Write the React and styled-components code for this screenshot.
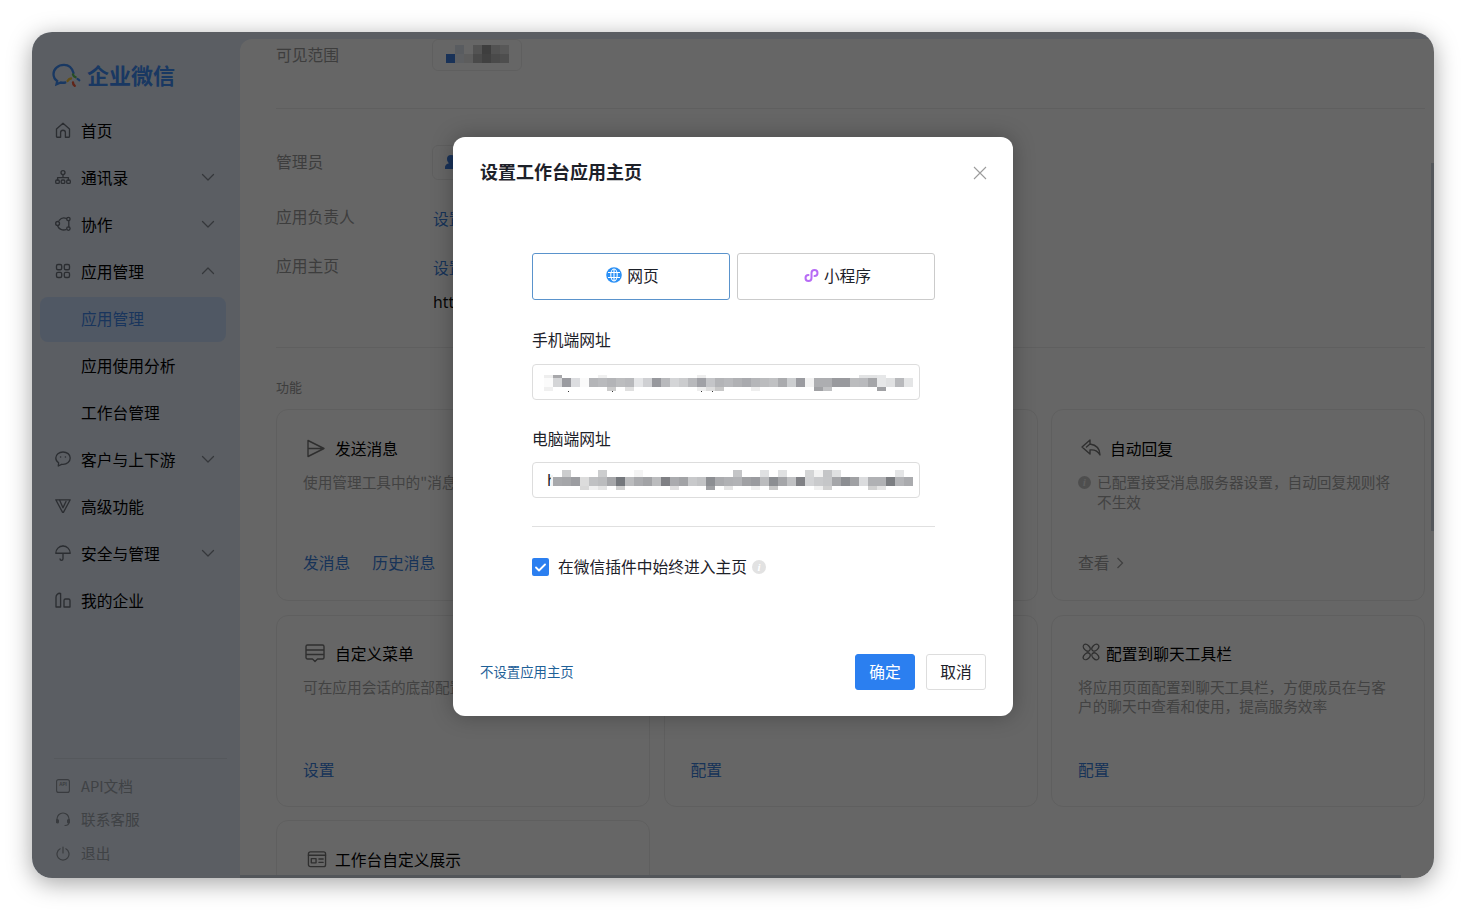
import React from "react";
import styled, { createGlobalStyle } from "styled-components";

const Global = createGlobalStyle`
  html, body { margin: 0; padding: 0; background: #fff; }
  body { font-family: "Noto Sans CJK SC", "Noto Sans", sans-serif; color: #000; }
  * { box-sizing: border-box; }
`;

const Page = styled.div`
  width: 1466px;
  height: 910px;
  padding: 32px;
  overflow: hidden;
`;
const Win = styled.div`
  position: relative;
  width: 1402px;
  height: 846px;
  border-radius: 20px;
  overflow: hidden;
  display: grid;
  grid-template-columns: 208px 1fr;
  background: #e3ebf7;
`;
const Shadow = styled.div`
  border-radius: 20px;
  box-shadow: 0 5px 24px rgba(0, 0, 0, 0.36);
  width: 1402px;
  height: 846px;
`;
const Side = styled.aside`
  display: flex;
  flex-direction: column;
  height: 846px;
  padding: 0 14px 8px 8px;
`;
const Logo = styled.div`
  display: flex;
  align-items: center;
  gap: 6px;
  height: 74.5px;
  padding: 10px 0 0 12px;
  font-size: 22px;
  font-weight: 700;
  color: #3f8cf5;
  line-height: 1;
`;
const LogoSvg = styled.svg`
  margin-top: 5px;
  flex: none;
`;
const Nav = styled.nav`
  display: flex;
  flex-direction: column;
`;
const NavItem = styled.div`
  height: 47px;
  display: flex;
  align-items: center;
  padding: 0 11px 0 15px;
  font-size: 15.75px;
  color: ${p => (p.$active ? "#3f86e8" : "#000")};
  position: relative;
  &::before {
    content: "";
    display: ${p => (p.$active ? "block" : "none")};
    position: absolute;
    left: 0; right: 0; top: 2px; bottom: 0;
    border-radius: 8px;
    background: #c8dcfa;
    z-index: 0;
  }
`;
const NavIcon = styled.span`
  width: 26px;
  height: 18px;
  flex: none;
  color: #6c727c;
  display: flex;
  align-items: center;
  position: relative;
`;
const NavLabel = styled.span`
  flex: 1;
  position: relative;
  white-space: nowrap;
`;
const Chev = styled.svg`
  width: 14px;
  height: 14px;
  color: #858b94;
  flex: none;
  position: relative;
`;
const SideFoot = styled.div`
  margin-top: auto;
  border-top: 1px solid #d4dbe6;
  margin-left: 14px;
  margin-right: -1px;
  padding-top: 11px;
`;
const FootItem = styled.div`
  height: 33.5px;
  display: flex;
  align-items: center;
  margin-left: 1px;
  padding-bottom: 2px;
  font-size: 14.67px;
  color: #9fa5ad;
`;
const FootIcon = styled.span`
  width: 26px;
  height: 16px;
  display: flex;
  align-items: center;
  padding-left: 1px;
  margin-top: 2px;
  color: #8f959d;
`;

const Main = styled.main`
  margin-top: 7px;
  height: 839px;
  background: #fff;
  border-top-left-radius: 12px;
  overflow: hidden;
  padding: 0 9px 0 36px;
`;
const InfoRow = styled.div`
  display: grid;
  grid-template-columns: 157px 1fr;
  align-items: center;
  height: ${p => p.$h}px;
  margin-top: ${p => p.$top || 0}px;
  font-size: 15.75px;
  color: #9a9a9a;
`;
const RowLabel = styled.span`
  padding-bottom: 2px;
`;
const Pill = styled.div`
  width: ${p => p.$w}px;
  height: 100%;
  margin-left: -1px;
  border: 1px solid #eee;
  border-radius: 6px;
  position: relative;
  overflow: hidden;
`;
const AdminGlyph = styled.svg`
  display: block;
  margin: 7px 0 0 8px;
`;
const Rule = styled.div`
  height: 1px;
  background: #eee;
  margin-top: ${p => p.$top}px;
  margin-bottom: ${p => p.$bottom}px;
`;
const SetLink = styled.span`
  color: #3a80dc;
  padding-top: 2px;
`;
const Url = styled.div`
  margin: -1px 0 0 157px;
  font-size: 15.75px;
  color: #111;
  height: 24px;
  line-height: 24px;
  font-family: "Noto Sans", sans-serif;
`;
const Section = styled.div`
  font-size: 13px;
  line-height: 18px;
  color: #9a9a9a;
  margin-bottom: 13px;
`;
const Cards = styled.div`
  display: grid;
  grid-template-columns: repeat(3, 374px);
  grid-auto-rows: 192px;
  gap: 13.5px;
`;
const Card = styled.section`
  border: 1px solid #eee;
  border-radius: 12px;
  padding: 27px 26px 0;
  display: flex;
  flex-direction: column;
`;
const CardTitle = styled.div`
  display: flex;
  align-items: center;
  height: 22px;
  font-size: 15.75px;
  color: #000;
  gap: ${p => p.$gap ?? 10}px;
  white-space: nowrap;
`;
const CardIcon = styled.span`
  display: flex;
  align-items: center;
  color: #757575;
  margin-left: ${p => p.$ml ?? 2}px;
  margin-top: ${p => p.$mt || 0}px;
`;
const Desc = styled.p`
  margin: ${p => (p.$tight ? 12 : 13)}px 0 0;
  font-size: 14.67px;
  line-height: ${p => (p.$tight ? 19 : 20)}px;
  color: #a6a6a6;
  height: 40px;
  white-space: ${p => (p.$nowrap ? "nowrap" : "normal")};
  display: ${p => (p.$flex ? "flex" : "block")};
  gap: 6px;
`;
const Links = styled.div`
  margin-top: ${p => p.$top ?? 39}px;
  display: flex;
  gap: 22px;
  font-size: 15.75px;
  line-height: 24px;
  color: ${p => (p.$muted ? "#a0a0a0" : "#3a80dc")};
  align-items: center;
`;
const MoreArrow = styled.svg`
  margin-left: -16px;
`;
const TinyDot = styled.span`
  flex: none;
  width: 13px;
  height: 13px;
  margin-top: 3.5px;
  border-radius: 50%;
  background: #c4c4c4;
  color: #eee;
  font: italic 700 10px/13px "Liberation Serif", serif;
  text-align: center;
`;

const VBar = styled.div`
  position: absolute;
  right: 0;
  top: 131px;
  width: 3px;
  height: 368px;
  background: #d0d6e0;
`;
const HBar = styled.div`
  position: absolute;
  left: 208px;
  bottom: 0;
  width: 1161px;
  height: 3px;
  background: #d0d6e0;
`;
const Overlay = styled.div`
  position: absolute;
  inset: 0;
  background: rgba(0, 0, 0, 0.6);
  display: flex;
  justify-content: center;
  padding-top: 105px;
`;
const Modal = styled.div`
  width: 560px;
  height: 579px;
  background: #fff;
  border-radius: 12px;
  box-shadow: 0 0 22px rgba(0, 0, 0, 0.28);
  display: flex;
  flex-direction: column;
  position: relative;
`;
const ModalHead = styled.div`
  display: flex;
  justify-content: space-between;
  align-items: center;
  height: 68px;
  padding: 0 26px 0 27px;
  font-size: 18px;
  font-weight: 700;
  color: #1d2129;
`;
const Close = styled.svg`
  width: 14px;
  height: 14px;
  color: #9c9c9c;
  margin-top: 4px;
`;
const Body = styled.div`
  padding: 48px 78px 0 79px;
  flex: 1;
`;
const Tabs = styled.div`
  display: grid;
  grid-template-columns: 198px 198px;
  gap: 7px;
  height: 47px;
`;
const Tab = styled.div`
  border: 1px solid ${p => (p.$on ? "#5a93cc" : "#cbcbcb")};
  border-radius: 3px;
  display: flex;
  align-items: center;
  justify-content: center;
  gap: 5px;
  padding: 0 0 2px 3px;
  font-size: 15.75px;
  color: #1d2129;
`;
const TabGlyph = styled.svg`
  flex: none;
  margin-top: -1px;
`;
const FieldLabel = styled.div`
  font-size: 15.75px;
  line-height: 24px;
  color: #1d2129;
  margin-top: ${p => p.$top}px;
  margin-bottom: ${p => p.$bottom}px;
`;
const UrlInput = styled.div`
  position: relative;
  width: 388px;
  height: 36px;
  border: 1px solid #ddd;
  border-radius: 4px;
  padding-left: 14px;
  font-size: 15.75px;
  line-height: 34px;
  color: #1d2129;
  font-family: "Noto Sans", sans-serif;
  overflow: hidden;
`;
const Mosaic = styled.svg`
  position: absolute;
  display: block;
  shape-rendering: crispEdges;
`;
const Divider = styled.div`
  height: 1px;
  background: #e0e0e0;
  margin-top: 28px;
`;
const CheckRow = styled.div`
  margin-top: 31px;
  display: flex;
  align-items: center;
  height: 18px;
  font-size: 15.75px;
  color: #1d2129;
`;
const CheckText = styled.span`
  padding-bottom: 2px;
`;
const Box = styled.span`
  width: 17px;
  height: 18px;
  border-radius: 2px;
  background: #2b7ff0;
  display: flex;
  align-items: center;
  justify-content: center;
  margin-right: 9px;
`;
const Hint = styled.span`
  width: 14px;
  height: 14px;
  margin-left: 5px;
  border-radius: 50%;
  background: #e2e2e2;
  color: #fff;
  font: italic 700 11px/14px "Liberation Serif", serif;
  text-align: center;
`;
const Foot = styled.div`
  display: flex;
  align-items: center;
  height: 36px;
  margin: 0 27px 26px;
  font-size: 13.4px;
  color: #1f6198;
`;
const FootLink = styled.span`
  padding-bottom: 2px;
`;
const Spacer = styled.span`
  flex: 1;
`;
const Btn = styled.div`
  width: 60px;
  height: 36px;
  border-radius: 3px;
  display: flex;
  align-items: center;
  justify-content: center;
  padding-bottom: 2px;
  font-size: 15.75px;
  margin-left: ${p => p.$ml || 0}px;
  background: ${p => (p.$primary ? "#2b7ff0" : "#fff")};
  color: ${p => (p.$primary ? "#fff" : "#1d2129")};
  border: 1px solid ${p => (p.$primary ? "#2b7ff0" : "#ddd")};
`;

const S = ({ children, w = 16, h = 16, vb = "0 0 16 16", sw = 1.35 }) => (
  <svg width={w} height={h} viewBox={vb} fill="none" stroke="currentColor" strokeWidth={sw} strokeLinecap="round" strokeLinejoin="round">{children}</svg>
);
const IHome = () => <S><path d="M1.5 7 8 1.2 14.5 7v7.6a.6.6 0 0 1-.6.6H10.4V10.6a2.4 2.4 0 0 0-4.8 0v4.6H2.1a.6.6 0 0 1-.6-.6z" /></S>;
const IOrg = () => <S><circle cx="8" cy="3.6" r="2" /><path d="M8 5.6v3M2.6 11V8.6h10.8V11" /><rect x=".7" y="11" width="3.6" height="3.4" rx="1.2" /><rect x="6.2" y="11" width="3.6" height="3.4" rx="1.2" /><rect x="11.7" y="11" width="3.6" height="3.4" rx="1.2" /></S>;
const ICollab = () => <S><path d="M11.5 2.5A6 6 0 0 0 4.2 4.4M2.8 10.2c.9 2.6 4.6 4.6 8.2 3.4M13.8 5v6" /><circle cx="13.4" cy="3" r="1.7" /><circle cx="13.4" cy="12.6" r="1.7" /><circle cx="2.6" cy="7.4" r="1.9" /></S>;
const IGrid = () => <S><rect x="1.5" y="1.5" width="5.2" height="5.2" rx="1.5" /><rect x="9.3" y="1.5" width="5.2" height="5.2" rx="1.5" /><rect x="1.5" y="9.3" width="5.2" height="5.2" rx="1.5" /><rect x="9.3" y="9.3" width="5.2" height="5.2" rx="1.5" /></S>;
const IBubble = () => <S><path d="M8 1C4 1 .8 3.6.8 7c0 2 1.1 3.700 2.800 4.800L3.300 15l3.300-1.700c.5.100.9.100 1.400.100 4 0 7.200-2.800 7.200-6.400S12 1 8 1z" /><circle cx="5.600" cy="6" r=".8" fill="currentColor" stroke="none" /><circle cx="10.400" cy="6" r=".8" fill="currentColor" stroke="none" /></S>;
const IVee = () => <S><path d="M.8 1.800h14.400L8.400 14.400h-.8zM4.400 1.800l3.600 8 2-4.300M10 5.500l1-2" /></S>;
const IUmbrella = () => <S><path d="M.8 8.200a7.200 7.200 0 0 1 14.400 0zM8 1V.6M8 8.200v5.600a1.500 1.500 0 0 1-3 0" /></S>;
const ICompany = () => <S><path d="M1 15V5.500a4 4 0 0 1 4-4.200h.6V15zM9 15V8.500a1.500 1.500 0 0 1 1.500-1.500h3a1.500 1.500 0 0 1 1.500 1.500V15z" /></S>;
const IApi = () => <svg width="14" height="14" viewBox="0 0 14 14" fill="none"><rect x=".6" y=".6" width="12.800" height="12.800" rx="2" stroke="currentColor" strokeWidth="1.100" /><text x="7" y="7.300" textAnchor="middle" fontSize="4.500" fontWeight="700" fontFamily="Liberation Sans" fill="currentColor">API</text></svg>;
const IHead = () => <S w={14} h={15} vb="0 0 14 15" sw={1.2}><path d="M1 8V7a6 6 0 0 1 12 0v3c0 2-1.500 3.500-4 3.500" /><rect x=".4" y="7.500" width="2" height="3.400" rx="1" fill="currentColor" /><rect x="11.600" y="7.500" width="2" height="3.400" rx="1" fill="currentColor" /></S>;
const IPower = () => <S w={14} h={15} vb="0 0 14 15" sw={1.2}><path d="M4.200 2.800a6 6 0 1 0 5.600 0M7 1v6" /></S>;

const ChevDown = () => <Chev viewBox="0 0 14 14" fill="none" stroke="currentColor" strokeWidth="1.300" strokeLinecap="round" strokeLinejoin="round"><path d="M1.500 4.500 7 10l5.500-5.500" /></Chev>;
const ChevUp = () => <Chev viewBox="0 0 14 14" fill="none" stroke="currentColor" strokeWidth="1.300" strokeLinecap="round" strokeLinejoin="round"><path d="M1.500 9.500 7 4l5.500 5.500" /></Chev>;

const nav = [
  { label: "首页", icon: <IHome /> },
  { label: "通讯录", icon: <IOrg />, chev: "d" },
  { label: "协作", icon: <ICollab />, chev: "d" },
  { label: "应用管理", icon: <IGrid />, chev: "u" },
  { label: "应用管理", active: true, sub: true },
  { label: "应用使用分析", sub: true },
  { label: "工作台管理", sub: true },
  { label: "客户与上下游", icon: <IBubble />, chev: "d" },
  { label: "高级功能", icon: <IVee /> },
  { label: "安全与管理", icon: <IUmbrella />, chev: "d" },
  { label: "我的企业", icon: <ICompany /> },
];

const LogoMark = () => (
  <LogoSvg width="29" height="27" viewBox="0 0 29 27" fill="none">
    <path d="M21.500 10C20 4.500 16 1.800 12 1.800 6 1.800 1.500 6 1.500 11c0 3 1.500 5.500 3.700 7l-.7 3.300 4.300-1.800c1.500.3 3 .3 4.500 0" stroke="#3f8cf5" strokeWidth="2.300" strokeLinecap="round" />
    <path d="M19 15.500c-1.500 0-2.500 1-3.400 2.400" stroke="#f5c33b" strokeWidth="2.400" strokeLinecap="round" />
    <path d="M21 11.500c.4 1.500 1.300 2.300 2.500 2.700" stroke="#5fc25b" strokeWidth="2.400" strokeLinecap="round" />
    <path d="M21 19.500c0 1.500.6 2.600 1.700 3.300" stroke="#ef5a3c" strokeWidth="2.400" strokeLinecap="round" />
    <path d="M25.500 16c.8.300 1.400.600 1.800 1.300" stroke="#3f8cf5" strokeWidth="2.200" strokeLinecap="round" />
  </LogoSvg>
);

const tile = (x, y, w, h, f, k) => <rect key={k} x={x} y={y} width={w} height={h} fill={f} />;
const MosaicBar = ({ data, left, top, rows, specks = [], lead = 0 }) => {
  const [a, b, c] = rows;
  return (
    <Mosaic style={{ left, top }} width={data.length * 9 + lead} height={a + b + c + 2}>
      {lead > 0 && tile(0, a - 2, lead, b + 2, "#f2f2f2", "lead")}
      {data.map((d, i) => (
        <g key={i}>
          {d[0] && tile(lead + i * 9, 0, 9, a, d[0], "t")}
          {d[1] && tile(lead + i * 9, a, 9, b, d[1], "m")}
          {d[2] && tile(lead + i * 9, a + b, 9, c, d[2], "b")}
        </g>
      ))}
      {specks.map((x, i) => tile(x, a + b + c, 1, 1, "#333", i))}
    </Mosaic>
  );
};

const m1 = [
  ["#eeeeee", "#fbfbfb", "#f0f0f0"], ["#a8a8ab", "#d4d5d7"], [null, "#9a9ba0"], [null, "#dcdde0"], [null, "#fafafa"],
  [null, "#b4b5b8"], ["#f0f0f0", "#b9babd"], [null, "#b3b4b7", "#cccccc"], [null, "#bcbdbf"], [null, "#b8b9bc", "#e0e0e0"],
  [null, "#e4e5e7"], [null, "#cfd0d3"], [null, "#97989d"], [null, "#b8b9bc"], [null, "#d4d5d7"],
  [null, "#cbccce"], [null, "#b8b9bc"], ["#eeeeee", "#a0a1a6", "#eeeeee"], [null, "#c4c5c8", "#dddddd"], [null, "#b3b4b7", "#c8c8c8"],
  [null, "#b8b9bc"], [null, "#b0b1b4"], [null, "#a9aaae"], [null, "#b5b6b9", "#eeeeee"], [null, "#bbbcbe"],
  [null, "#c0c1c3"], [null, "#aaabae"], [null, "#ccced0"], [null, "#9a9ba0"], [null, "#f2f2f2"],
  [null, "#adaeb1", "#a0a1a4"], [null, "#adaeb1", "#c0c1c3"], [null, "#999a9e"], [null, "#999a9e"], [null, "#bbbcbe"],
  ["#e2e3e4", "#b9babd"], ["#e2e3e4", "#a5a6a9"], ["#e6e7e8", "#e6e7e8", "#a0a1a4"], [null, "#e0e1e2"], [null, "#b8b9bc"],
  [null, "#e4e5e6"],
];
const m2 = [
  [null, "#a8a9ac"], ["#cccdce", "#a5a6a9"], [null, "#9c9da1"], [null, "#dcdcdc", "#d8d8d8"], [null, "#c0c1c3", "#f0f0f0"],
  ["#cccdce", "#bbbcbe", "#e4e4e4"], [null, "#a5a6a9"], [null, "#74777c", "#d0d0d0"], [null, "#bbbcbe"], ["#f4f4f4", "#aaabae"],
  [null, "#a2a3a6"], [null, "#bbbcbe"], [null, "#7f8084"], [null, "#aaabae", "#e0e0e0"], [null, "#a2a3a6"],
  [null, "#c8c9cb"], [null, "#c2c3c5"], [null, "#8c8e92", "#a0a1a4"], [null, "#aaabae"], [null, "#b0b1b4", "#e4e4e4"],
  ["#c4c5c7", "#b2b3b6"], [null, "#a0a1a4"], [null, "#9a9b9f", "#f0f0f0"], ["#e0e1e2", "#bbbcbe"], [null, "#8c8e92", "#c8c8c8"],
  ["#e0e1e2", "#a5a6a9"], [null, "#c0c1c3"], [null, "#808185"], ["#d4d5d6", "#d2d3d5"], ["#f2f2f2", "#c9cacc", "#f0f0f0"],
  ["#c4c5c7", "#c5c6c8", "#d0d0d0"], ["#e0e1e2", "#a5a6a9"], [null, "#8c8e92"], [null, "#a0a1a4"], [null, "#dbdcde"],
  [null, "#b0b1b4", "#d0d0d0"], [null, "#b0b1b4", "#e4e4e4"], [null, "#7c7e82"], ["#e4e5e6", "#b4b5b8"], [null, "#aaabae"],
];
const m3 = [
  [null, "#3f7ddc"], ["#dfe6ef", "#e8eef5"], [null, "#e8e8e8"], ["#cfcfcf", "#bababa"], ["#9c9c9c", "#a4a4a4"], ["#cccccc", "#bababa"], ["#dddddd", "#c4c4c4"],
];

export default function App() {
  return (
    <Page>
      <Global />
      <Shadow>
        <Win>
          <Side>
            <Logo><LogoMark />企业微信</Logo>
            <Nav>
              {nav.map((n, i) => (
                <NavItem key={i} $active={n.active}>
                  <NavIcon>{n.icon}</NavIcon>
                  <NavLabel>{n.label}</NavLabel>
                  {n.chev === "d" && <ChevDown />}
                  {n.chev === "u" && <ChevUp />}
                </NavItem>
              ))}
            </Nav>
            <SideFoot>
              <FootItem><FootIcon><IApi /></FootIcon>API文档</FootItem>
              <FootItem><FootIcon><IHead /></FootIcon>联系客服</FootItem>
              <FootItem><FootIcon><IPower /></FootIcon>退出</FootItem>
            </SideFoot>
          </Side>
          <Main>
            <InfoRow $h={32}>
              <RowLabel>可见范围</RowLabel>
              <Pill $w={90}><MosaicBar data={m3} left={13} top={5} rows={[9, 9, 0]} /></Pill>
            </InfoRow>
            <Rule $top={37} $bottom={36} />
            <InfoRow $h={35}>
              <RowLabel>管理员</RowLabel>
              <Pill $w={90}>
                <AdminGlyph width="20" height="20" viewBox="0 0 20 20"><path d="M10 2a4 4 0 0 1 4 4c0 2-1 3.500-2 4.300 2 .6 4 1.800 4 3.700v2H4v-2c0-1.900 2-3.100 4-3.700C7 9.500 6 8 6 6a4 4 0 0 1 4-4z" fill="#3f7ddc" /></AdminGlyph>
              </Pill>
            </InfoRow>
            <InfoRow $h={49} $top={13}>
              <RowLabel>应用负责人</RowLabel>
              <SetLink>设置</SetLink>
            </InfoRow>
            <InfoRow $h={49}>
              <RowLabel>应用主页</RowLabel>
              <SetLink>设置</SetLink>
            </InfoRow>
            <Url>https://</Url>
            <Rule $top={33} $bottom={30} />
            <Section>功能</Section>
            <Cards>
              <Card>
                <CardTitle>
                  <CardIcon $ml={4}><S w={18} h={19} vb="0 0 18 19" sw={1.400}><path d="M1 1.500 17 9.500 1 17.500zM1 9.500h16" /></S></CardIcon>
                  发送消息
                </CardTitle>
                <Desc $nowrap>使用管理工具中的"消息</Desc>
                <Links><span>发消息</span><span>历史消息</span></Links>
              </Card>
              <Card />
              <Card>
                <CardTitle $gap={9}>
                  <CardIcon $ml={3}><S w={20} h={18} vb="0 0 20 18" sw={1.400}><path d="M9 1 1 8l8 7v-4c4-.5 7.500.5 10 5 0-6-3.500-10-10-11zM5.500 8 9 5" /></S></CardIcon>
                  自动回复
                </CardTitle>
                <Desc $flex><TinyDot>i</TinyDot><span>已配置接受消息服务器设置，自动回复规则将不生效</span></Desc>
                <Links $muted>
                  <span>查看</span>
                  <MoreArrow width="8" height="12" viewBox="0 0 8 12" fill="none" stroke="#a0a0a0" strokeWidth="1.300"><path d="M1.500 1 6.500 6l-5 5" /></MoreArrow>
                </Links>
              </Card>
              <Card>
                <CardTitle>
                  <CardIcon $ml={2}><S w={20} h={19} vb="0 0 20 19" sw={1.400}><path d="M1 2.500a1.500 1.500 0 0 1 1.500-1.500h15a1.500 1.500 0 0 1 1.500 1.500v11a1.500 1.500 0 0 1-1.500 1.500h-5L10 17.500 7.500 15h-5A1.500 1.500 0 0 1 1 13.500zM1 6h18M1 10.500h18" /></S></CardIcon>
                  自定义菜单
                </CardTitle>
                <Desc $nowrap $tight>可在应用会话的底部配置</Desc>
                <Links $top={41}><span>设置</span></Links>
              </Card>
              <Card>
                <CardTitle />
                <Desc $tight />
                <Links $top={41}><span>配置</span></Links>
              </Card>
              <Card>
                <CardTitle $gap={6}>
                  <CardIcon $ml={4} $mt={-3}>
                    <S w={18} h={18} vb="0 0 18 18" sw={1.300}>
                      <ellipse cx="4.700" cy="4.700" rx="4" ry="2.700" transform="rotate(45 4.700 4.700)" />
                      <ellipse cx="13.300" cy="4.700" rx="4" ry="2.700" transform="rotate(-45 13.300 4.700)" />
                      <ellipse cx="4.700" cy="13.300" rx="4" ry="2.700" transform="rotate(-45 4.700 13.300)" />
                      <ellipse cx="13.300" cy="13.300" rx="4" ry="2.700" transform="rotate(45 13.300 13.300)" />
                    </S>
                  </CardIcon>
                  配置到聊天工具栏
                </CardTitle>
                <Desc $tight>将应用页面配置到聊天工具栏，方便成员在与客户的聊天中查看和使用，提高服务效率</Desc>
                <Links $top={41}><span>配置</span></Links>
              </Card>
              <Card>
                <CardTitle $gap={8}>
                  <CardIcon $ml={4}><S w={20} h={19} vb="0 0 21 19" sw={1.400}><rect x="1.500" y="1.500" width="18" height="15.500" rx="2" /><path d="M1.500 5h18M12.500 9h4.500M12.500 12.500h4.500" /><rect x="4.500" y="8.500" width="5" height="4.500" /></S></CardIcon>
                  工作台自定义展示
                </CardTitle>
              </Card>
            </Cards>
          </Main>
          <VBar />
          <HBar />
          <Overlay>
            <Modal>
              <ModalHead>
                设置工作台应用主页
                <Close viewBox="0 0 14 14" fill="none" stroke="currentColor" strokeWidth="1.100"><path d="M1 1l12 12M13 1 1 13" /></Close>
              </ModalHead>
              <Body>
                <Tabs>
                  <Tab $on>
                    <TabGlyph width="16" height="16" viewBox="0 0 16 16" fill="none">
                      <circle cx="8" cy="8" r="7.800" fill="#2b90f5" />
                      <ellipse cx="8" cy="8" rx="3.200" ry="6" stroke="#fff" strokeWidth="1.100" />
                      <path d="M2 5.500h12M2 10.500h12M8 2v12" stroke="#fff" strokeWidth="1.100" />
                    </TabGlyph>
                    网页
                  </Tab>
                  <Tab>
                    <TabGlyph width="15" height="15" viewBox="0 0 15 15" fill="none" stroke="#b76bf5" strokeWidth="2" strokeLinecap="round">
                      <path d="M7.500 5.500V10a3 3 0 1 1-3-3M7.500 10V5a3 3 0 1 1 3 3" />
                    </TabGlyph>
                    小程序
                  </Tab>
                </Tabs>
                <FieldLabel $top={28} $bottom={12}>手机端网址</FieldLabel>
                <UrlInput>
                  <MosaicBar data={m1} left={11} top={10} rows={[3, 9, 4]} specks={[24, 68, 157, 168]} />
                </UrlInput>
                <FieldLabel $top={27} $bottom={11}>电脑端网址</FieldLabel>
                <UrlInput>
                  h
                  <MosaicBar data={m2} left={18} top={7} rows={[7, 9, 4]} lead={2} />
                </UrlInput>
                <Divider />
                <CheckRow>
                  <Box>
                    <svg width="11" height="9" viewBox="0 0 11 9" fill="none" stroke="#fff" strokeWidth="1.800" strokeLinecap="round" strokeLinejoin="round"><path d="M1 4.500 4 7.500 10 1.500" /></svg>
                  </Box>
                  <CheckText>在微信插件中始终进入主页</CheckText>
                  <Hint>i</Hint>
                </CheckRow>
              </Body>
              <Foot>
                <FootLink>不设置应用主页</FootLink>
                <Spacer />
                <Btn $primary>确定</Btn>
                <Btn $ml={11}>取消</Btn>
              </Foot>
            </Modal>
          </Overlay>
        </Win>
      </Shadow>
    </Page>
  );
}
